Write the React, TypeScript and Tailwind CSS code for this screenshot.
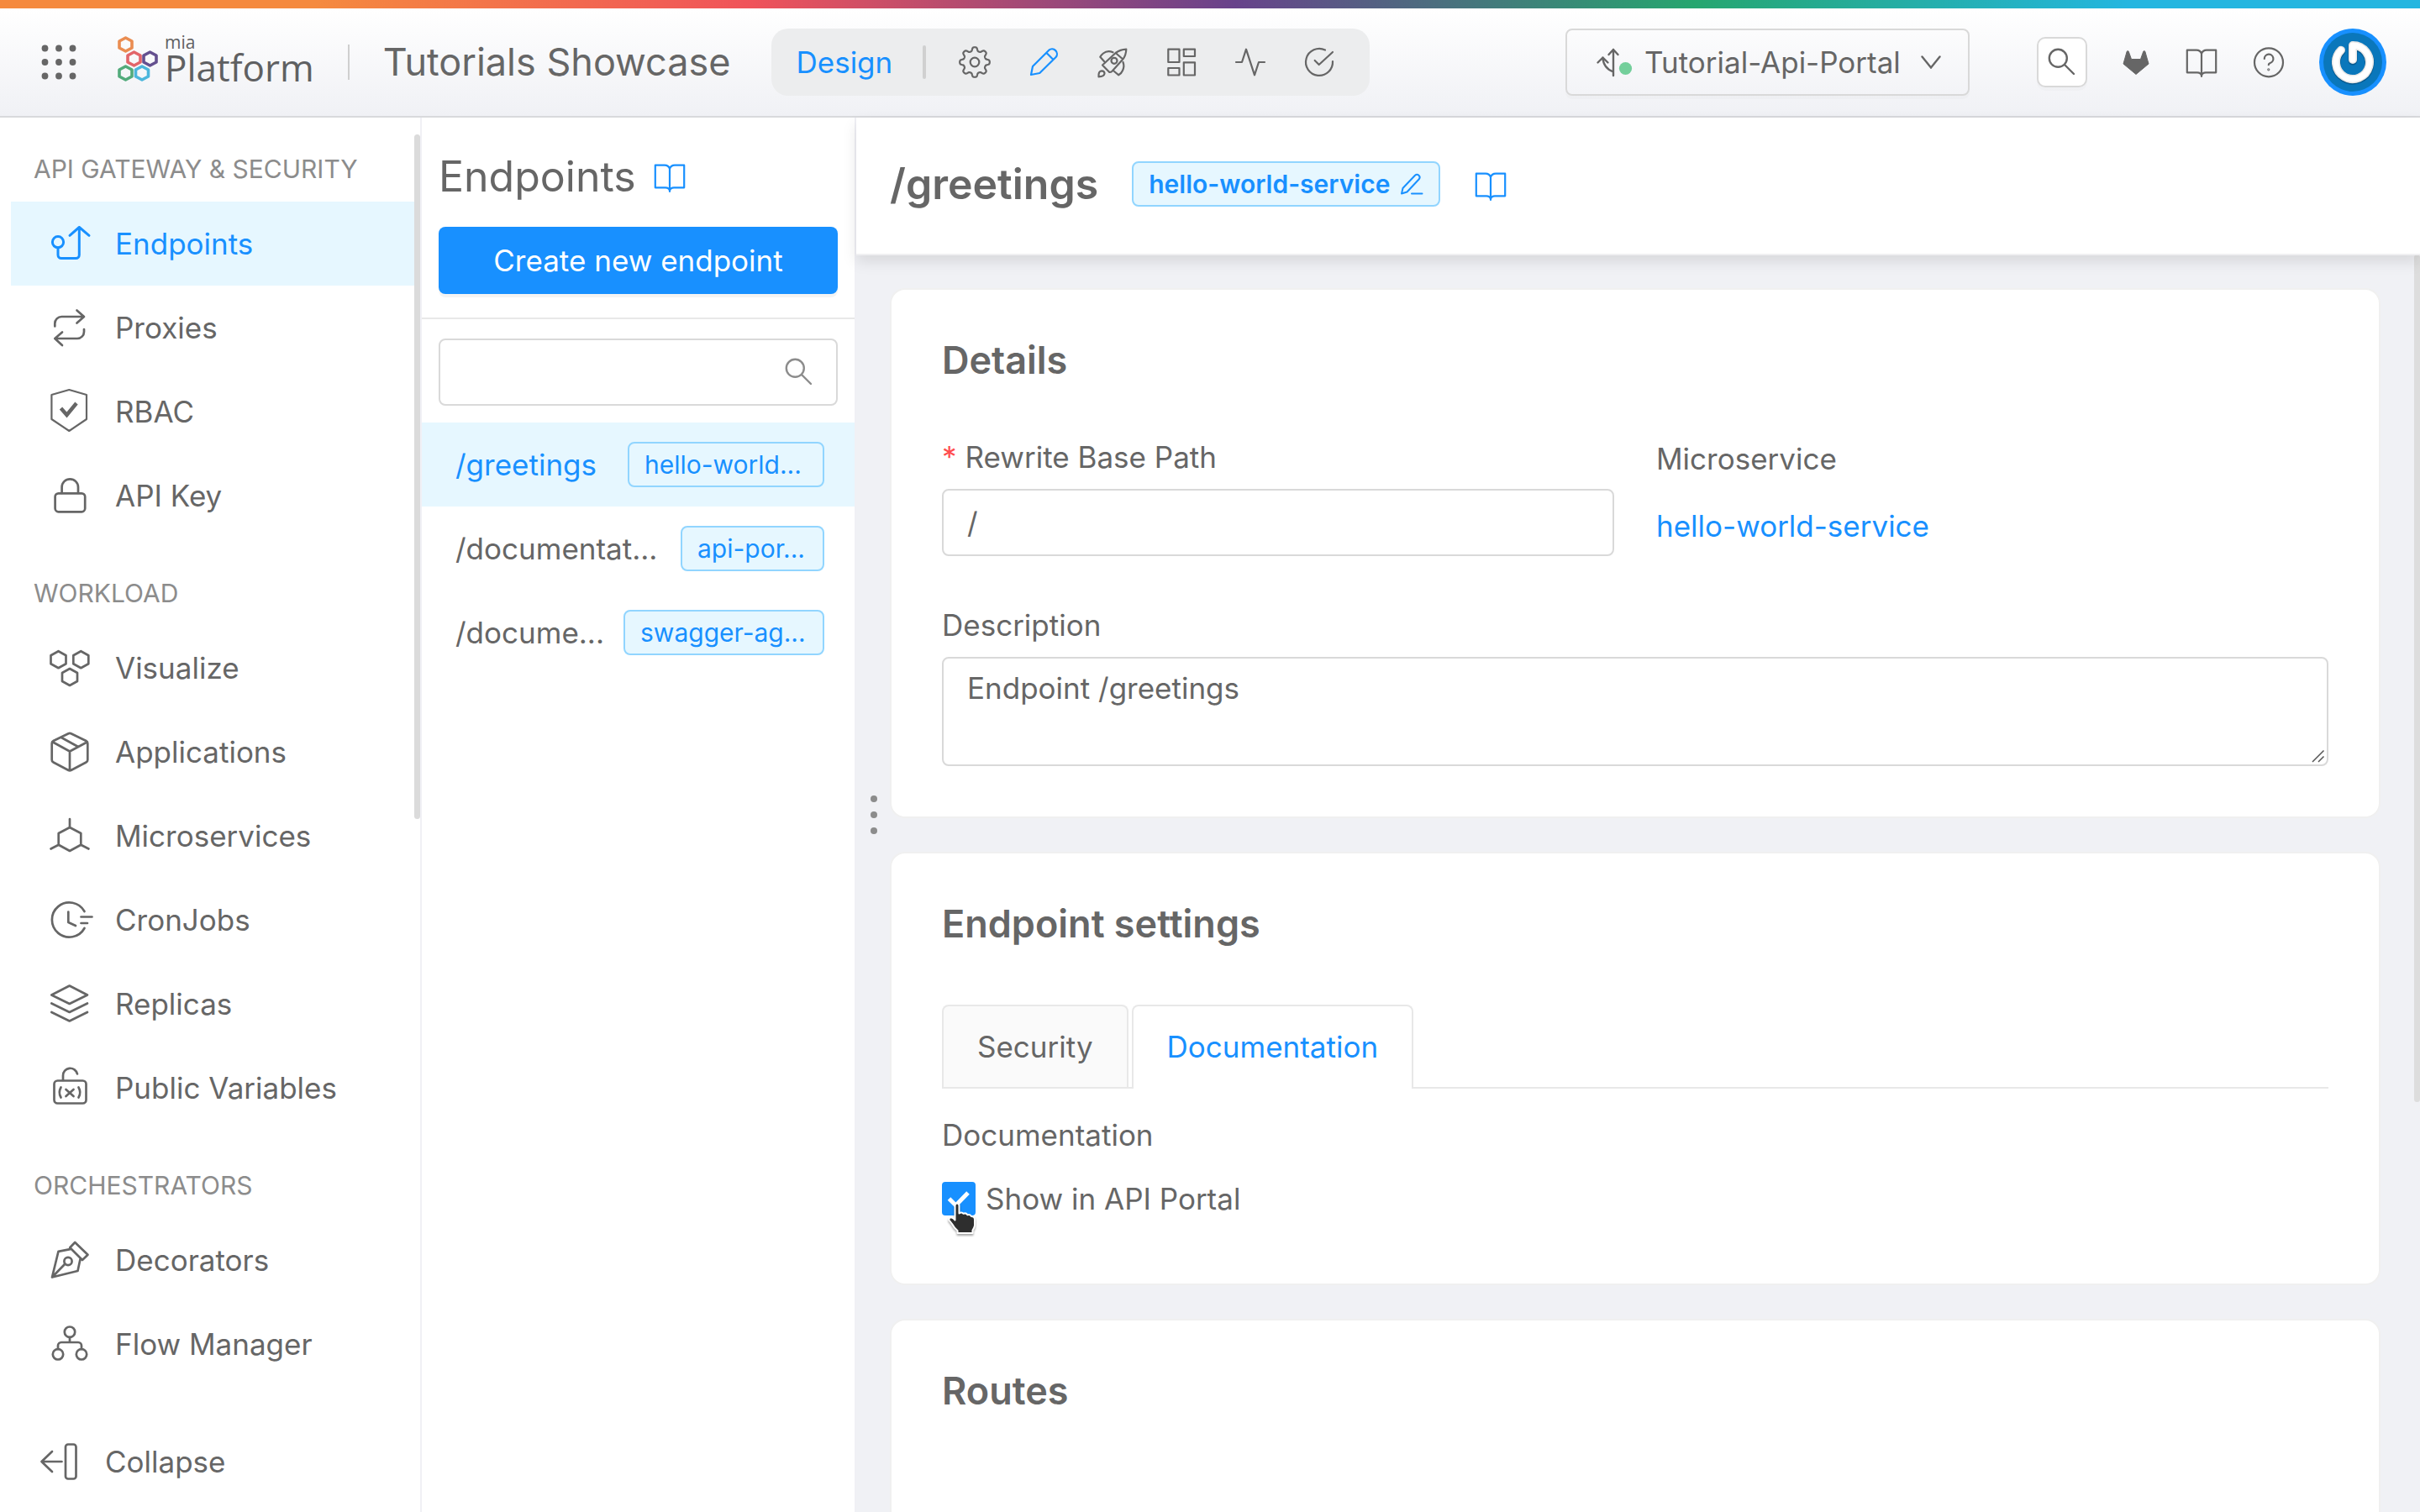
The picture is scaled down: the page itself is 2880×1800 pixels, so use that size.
import type { ReactNode } from "react";

type IconProps = { className?: string; width?: number; children: ReactNode };

function Icon48({ className = "", width = 2.7, children }: IconProps) {
  return (
    <svg aria-hidden="true" viewBox="0 0 48 48" className={`size-12 shrink-0 overflow-visible ${className}`} fill="none" stroke="currentColor" strokeWidth={width} strokeLinecap="round" strokeLinejoin="round">
      {children}
    </svg>
  );
}

function Icon40({ className = "", width = 2.2, children }: IconProps) {
  return (
    <svg aria-hidden="true" viewBox="0 0 40 40" className={`size-10 shrink-0 overflow-visible ${className}`} fill="none" stroke="currentColor" strokeWidth={width} strokeLinecap="round" strokeLinejoin="round">
      {children}
    </svg>
  );
}

const gearPath =
  Array.from({ length: 192 }, (_, i) => {
    const a = (i / 192) * Math.PI * 2;
    const r = 15.6 + 2.2 * Math.tanh(1.8 * Math.cos(8 * a)) / Math.tanh(1.8);
    return `${i === 0 ? "M" : "L"}${(20 + r * Math.cos(a)).toFixed(2)} ${(20 + r * Math.sin(a)).toFixed(2)}`;
  }).join(" ") + "Z";

function BookIcon({ className = "" }: { className?: string }) {
  return (
    <Icon40 className={className}>
      <path d="M20 37V10C19 7 17 5.7 14 5.7H2.8V32.3H15C18 32.3 19.5 33.5 20 36C20.5 33.5 22 32.3 25 32.3H37.2V5.7H26C23 5.7 21 7 20 10" />
    </Icon40>
  );
}

function SearchIcon({ className = "" }: { className?: string }) {
  return (
    <Icon40 className={className} width={2.4}>
      <circle cx="15.3" cy="15.3" r="10.5" />
      <path d="M23.5 23.5 34 34" />
    </Icon40>
  );
}

const hex = (x: number, y: number) => `M${x} ${y - 10}L${x + 9} ${y - 5}V${y + 5}L${x} ${y + 10}L${x - 9} ${y + 5}V${y - 5}Z`;

const sections = [
  {
    title: "API GATEWAY & SECURITY",
    items: [
      {
        label: "Endpoints",
        active: true,
        icon: (
          <Icon48 width={3}>
            <circle cx="10" cy="22.2" r="6.6" />
            <path d="M10 29v8.5a4 4 0 0 0 4 4h17.3a4 4 0 0 0 4-4V4.5M24 14.3 35.3 4.5 47 14.3" />
          </Icon48>
        ),
      },
      {
        label: "Proxies",
        icon: (
          <Icon48>
            <path d="M6.3 22.5V19a8 8 0 0 1 8-8H40M32.5 3.5 41 11l-8.5 7.5M41 26v3a8 8 0 0 1-8 8H7M15 29.5 6.3 37l8.7 8" />
          </Icon48>
        ),
      },
      {
        label: "RBAC",
        icon: (
          <Icon48 width={2.2}>
            <path d="M23.3-2 44 4v29L23.3 47 2.4 33V4Z" />
            <path d="m13.5 20 7 8L32 14" strokeWidth="4.4" strokeLinecap="butt" strokeLinejoin="miter" />
          </Icon48>
        ),
      },
      {
        label: "API Key",
        icon: (
          <Icon48>
            <rect x="6.6" y="21.3" width="35.6" height="22" rx="4" />
            <path d="M14.6 21V14a9.7 9.7 0 0 1 19.4 0v7" />
          </Icon48>
        ),
      },
    ],
  },
  {
    title: "WORKLOAD",
    items: [
      {
        label: "Visualize",
        icon: (
          <Icon48>
            <path d={hex(10.5, 14.2)} />
            <path d={hex(37.3, 14.2)} />
            <path d={hex(24, 35)} />
          </Icon48>
        ),
      },
      {
        label: "Applications",
        icon: (
          <Icon48>
            <path d="M22.5 2.2a3.5 3.5 0 0 1 3 0L43.5 11a3.2 3.2 0 0 1 1.8 3v19.5a3.2 3.2 0 0 1-1.8 3L25.5 46a3.5 3.5 0 0 1-3 0L4.5 36.5a3.2 3.2 0 0 1-1.8-3V14a3.2 3.2 0 0 1 1.8-3ZM4 12.5 24 23.5 44.5 12.5M24 23.5V46M14 7l20 11" />
          </Icon48>
        ),
      },
      {
        label: "Microservices",
        icon: (
          <Icon48>
            <path d="M24 4v10l13.3 7v13.7L24 42l-13.3-7.3V21L24 14M10.7 34.7 1.5 39.5M37.3 34.7l9.2 4.8" />
          </Icon48>
        ),
      },
      {
        label: "CronJobs",
        icon: (
          <Icon48>
            <path d="M41.5 14A20.6 20.6 0 1 0 41.5 34M22.3 14.5V27l8.7 4M37.5 20.5H50.5M37.5 28H45" />
          </Icon48>
        ),
      },
      {
        label: "Replicas",
        icon: (
          <Icon48>
            <path d="M23.7 2.5 45 13.5 23.7 24 2.3 13.5ZM2.3 23.5l21.4 10.5L45 23.5M2.3 34l21.4 10.5L45 34" />
          </Icon48>
        ),
      },
      {
        label: "Public Variables",
        icon: (
          <Icon48>
            <rect x="5.5" y="15.5" width="38" height="27" rx="4" />
            <path d="M16 15V9.5a8.6 8.6 0 0 1 17-2M13.5 23.5q-3.5 6 0 12M34.5 23.5q3.5 6 0 12M19.5 26l9 8M28.5 26l-9 8" />
          </Icon48>
        ),
      },
    ],
  },
  {
    title: "ORCHESTRATORS",
    items: [
      {
        label: "Decorators",
        icon: (
          <Icon48>
            <path d="M24.2 9.3 30.2 3 45.5 17.7 39 24ZM24.5 11.2 10.5 13.8 3 44.5 33.5 37l3-14M3 44.5 18.5 28.5" />
            <circle cx="22" cy="25.5" r="4.6" />
          </Icon48>
        ),
      },
      {
        label: "Flow Manager",
        icon: (
          <Icon48>
            <circle cx="24" cy="9.7" r="6.2" />
            <circle cx="10" cy="36.3" r="6.2" />
            <circle cx="38" cy="36.3" r="6.2" />
            <path d="M24 16v6M10 30v-4a4 4 0 0 1 4-4H34a4 4 0 0 1 4 4v4" />
          </Icon48>
        ),
      },
    ],
  },
];

const stages = [
  {
    label: "Settings",
    icon: (
      <Icon40>
        <path d={gearPath} />
        <circle cx="20" cy="20" r="5.3" />
      </Icon40>
    ),
  },
  {
    label: "Design",
    active: true,
    icon: (
      <Icon40>
        <path d="M5 35 7 25 26.3 5.7a5.9 5.9 0 0 1 8.3 8.3L15.3 33ZM23.5 9l8 8" />
      </Icon40>
    ),
  },
  {
    label: "Deploy",
    icon: (
      <Icon40>
        <path d="M36.3 4.7Q29 5 23.7 9L8 23.5 16.3 32q2 0 3-1L32.3 16.5Q36 12 36.3 4.7ZM23.7 9l8.6 7.5M20.5 8.3Q14 5.5 9 9.5 6.5 11.5 5.3 13.7L10 19M32.5 20Q34.5 25 32 30 30.5 33.5 27.3 35.3L22 31M3.5 37.3Q3 30.5 7 30.3 10.5 30.5 10.5 33.5 10.3 37 3.5 37.3Z" />
        <circle cx="22" cy="18.3" r="3.5" />
      </Icon40>
    ),
  },
  {
    label: "Dashboards",
    icon: (
      <Icon40>
        <path d="M4.3 4.7H17.5V20H4.3ZM22.8 4.7H36V13H22.8ZM4.3 27H17.5V35.5H4.3ZM22.8 20.3H36V35.5H22.8Z" />
      </Icon40>
    ),
  },
  {
    label: "Monitoring",
    icon: (
      <Icon40>
        <path d="M3 20h7L15 4.7 25 35.3 30 20h7" />
      </Icon40>
    ),
  },
  {
    label: "Quality",
    icon: (
      <Icon40>
        <path d="M27 5.5A16 16 0 1 0 36 19M14.7 18l5 5L36 8" />
      </Icon40>
    ),
  },
];

const endpoints = [
  { path: "/greetings", service: "hello-world...", tag: "w-[234px]", active: true },
  { path: "/documentat...", service: "api-por...", tag: "w-[171px]" },
  { path: "/docume...", service: "swagger-ag...", tag: "w-[239px]" },
];

function Logo() {
  const cell = (x: number, y: number, color: string) => (
    <path d={`M${x} ${y - 8}L${x + 7.5} ${y - 4}V${y + 4}L${x} ${y + 8}L${x - 7.5} ${y + 4}V${y - 4}Z`} stroke={color} strokeWidth="3.6" strokeLinejoin="round" fill="none" />
  );
  return (
    <a href="#home" className="flex items-center gap-2 font-['Open_Sans',sans-serif] text-[#5f6062]">
      <svg aria-hidden="true" viewBox="0 0 48 54" className="mb-2 h-[54px] w-12 shrink-0 overflow-visible">
        {cell(9.5, 10, "#ea8d51")}
        {cell(19.5, 27, "#e2656a")}
        {cell(38.5, 27, "#64508f")}
        {cell(9.5, 44, "#52ab7b")}
        {cell(29, 44, "#4cb6dc")}
      </svg>
      <span className="flex flex-col pb-2">
        <span className="text-[21px] leading-5">mia</span>
        <span className="text-[44px] leading-10">Platform</span>
      </span>
    </a>
  );
}

function Header() {
  return (
    <header className="shrink-0">
      <div className="h-2.5 bg-[linear-gradient(90deg,#f58a3f_0%,#f58a3f_13%,#f0535a_31%,#68428b_51%,#26a66f_70%,#24b6e0_88%,#24b6e0_100%)]" />
      <div className="flex h-[130px] items-center border-b-2 border-[#d8d9dc] bg-gradient-to-b from-white to-[#f0f1f5] pr-10 pl-[46px]">
        <button type="button" aria-label="Applications menu" className="mr-[46px]">
          <svg aria-hidden="true" viewBox="0 0 48 48" className="size-12" fill="#666">
            {[7.5, 24, 40.5].map((y) => [7.5, 24, 40.5].map((x) => <circle key={`${x}-${y}`} cx={x} cy={y} r="3.9" />))}
          </svg>
        </button>
        <Logo />
        <span className="ml-10 h-[42px] w-0.5 bg-[#cfcfcf]" />
        <span className="ml-10 text-[45px] leading-[60px] whitespace-nowrap">Tutorials Showcase</span>
        <nav aria-label="Stages" className="ml-12 flex h-20 items-center rounded-[20px] bg-[#ecedee] pr-10 pl-[30px]">
          <span className="text-[35px] text-[#1890ff]">Design</span>
          <span className="mr-[38px] ml-9 h-10 w-1 rounded-full bg-[#d0d0d0]" />
          <span className="flex gap-[42px]">
            {stages.map((s) => (
              <button key={s.label} type="button" aria-label={s.label} className={s.active ? "text-[#1890ff]" : ""}>
                {s.icon}
              </button>
            ))}
          </span>
        </nav>
        <div className="ml-auto flex items-center">
          <label className="flex h-20 items-center rounded-lg border-2 border-[#d9d9d9] px-8 shadow-[0_4px_0_rgba(0,0,0,0.015)]">
            <svg aria-hidden="true" viewBox="0 0 50 40" className="h-10 w-[50px] overflow-visible" fill="none" stroke="#666" strokeWidth="2.4" strokeLinecap="round" strokeLinejoin="round">
              <path d="M23 36V5M17.5 11 23 5l5.5 6M23 31.5Q11 27 10.5 14.5M4.5 20.5l6-6 6 6" />
              <circle cx="37.5" cy="27.5" r="7.6" fill="#73cf9b" stroke="none" />
            </svg>
            <select aria-label="Branch" className="ml-2.5 appearance-none bg-transparent text-[35px] leading-[54px] outline-none">
              <option>Tutorial-Api-Portal</option>
            </select>
            <svg aria-hidden="true" viewBox="0 0 24 16" className="ml-6 h-4 w-6" fill="none" stroke="#666" strokeWidth="2.4" strokeLinecap="round">
              <path d="m1.5 1.5 10.5 13L22.5 1.5" />
            </svg>
          </label>
          <button type="button" aria-label="Search" className="ml-20 flex size-[60px] items-center justify-center rounded-[10px] border-2 border-[#d9d9d9] bg-white shadow-[0_4px_0_rgba(0,0,0,0.015)]">
            <SearchIcon />
          </button>
          <button type="button" aria-label="Repository" className="ml-[38px]">
            <svg aria-hidden="true" viewBox="0 0 40 40" className="size-10" fill="#666" stroke="#666" strokeWidth="1" strokeLinejoin="round">
              <path d="M5 22 9.2 7.2q1-1.2 2 0L14.5 16.5H25.5L28.8 7.2q1-1.2 2 0L35 22 20 34.5Z" />
            </svg>
          </button>
          <button type="button" aria-label="Documentation" className="ml-[38px]">
            <BookIcon />
          </button>
          <button type="button" aria-label="Help" className="ml-10">
            <Icon40>
              <circle cx="20" cy="20.3" r="17" />
              <path d="M14.8 16a5.3 5.3 0 1 1 7 5q-2 .8-2 2.2" />
              <circle cx="19.8" cy="28.8" r=".5" />
            </Icon40>
          </button>
          <button type="button" aria-label="Account" className="ml-10">
            <svg aria-hidden="true" viewBox="0 0 80 80" className="size-20" fill="none" strokeLinecap="round" strokeLinejoin="round">
              <circle cx="40" cy="40" r="40" fill="#1890ff" />
              <circle cx="40" cy="40" r="35" fill="#0a77bb" />
              <path d="M40 38V21A20 20 0 1 1 26 26.7" stroke="#075a8f" strokeWidth="11" />
              <path d="M40 37V20A20 20 0 1 1 26 25.7" stroke="#e6e6e6" strokeWidth="10" />
              <path d="M40 37V20A20 20 0 1 1 26 25.7" stroke="#fff" strokeWidth="7" />
            </svg>
          </button>
        </div>
      </div>
    </header>
  );
}

function Sidebar() {
  return (
    <aside className="flex w-[502px] shrink-0 flex-col border-r-2 border-[#f0f0f5] bg-white">
      <div className="relative min-h-0 flex-1">
        <nav aria-label="Sections" className="flex flex-col gap-11 pt-[39px] pr-[7px]">
          {sections.map((section) => (
            <section key={section.title}>
              <h2 className="mb-[17px] pl-10 text-[30px] leading-[44px] text-[#8c8c8c]">{section.title}</h2>
              <ul>
                {section.items.map((item) => (
                  <li key={item.label}>
                    <a href={`#${item.label}`} className={`ml-[13px] flex h-[100px] items-center gap-[30px] pl-[46px] text-[35px] ${"active" in item && item.active ? "bg-[#e6f7ff] text-[#1890ff]" : ""}`}>
                      {item.icon}
                      {item.label}
                    </a>
                  </li>
                ))}
              </ul>
            </section>
          ))}
        </nav>
        <div className="absolute top-5 right-0 h-[815px] w-[7px] rounded-full bg-[#dbdbdb]" />
      </div>
      <button type="button" className="flex h-[120px] shrink-0 items-center gap-[30px] pl-[47px] text-[35px]">
        <Icon48>
          <path d="M2.5 24H26.5M15 12 2.5 24 15 36" />
          <rect x="31" y="3.5" width="12.5" height="41" rx="3" />
        </Icon48>
        Collapse
      </button>
    </aside>
  );
}

function EndpointList() {
  return (
    <section className="flex w-[517px] shrink-0 flex-col border-r-2 border-[#f0f0f5] bg-white">
      <div className="border-b-2 border-[#e8e8e8] px-5 pt-9 pb-7">
        <div className="flex items-center gap-5">
          <h1 className="text-[50px] leading-[68px]">Endpoints</h1>
          <a href="#docs" aria-label="Endpoint docs" className="pt-0.5 text-[#1890ff]">
            <BookIcon />
          </a>
        </div>
        <button type="button" className="mt-[26px] flex h-20 w-full items-center justify-center rounded-lg bg-[#1890ff] text-[35px] text-white shadow-[0_4px_0_rgba(0,0,0,0.045)]">
          Create new endpoint
        </button>
      </div>
      <label className="mx-5 mt-[23px] mb-5 flex h-20 items-center rounded-lg border-2 border-[#d9d9d9] pr-6 text-[#8c8c8c]">
        <input type="text" aria-label="Search endpoints" className="h-full min-w-0 flex-1 bg-transparent pl-7 text-[35px] outline-none" />
        <SearchIcon />
      </label>
      <ul>
        {endpoints.map((e) => (
          <li key={e.path}>
            <a href={`#${e.path}`} className={`flex h-[100px] items-center justify-between pr-9 pl-10 text-[35px] ${e.active ? "bg-[#e6f7ff] text-[#1890ff]" : ""}`}>
              {e.path}
              <span className={`h-[54px] rounded-lg border-2 border-[#91d5ff] bg-[#e6f7ff] pl-[18px] text-[30px] leading-[50px] text-[#1890ff] ${e.tag}`}>{e.service}</span>
            </a>
          </li>
        ))}
      </ul>
    </section>
  );
}

function Card({ title, className = "", children }: { title: string; className?: string; children?: ReactNode }) {
  return (
    <section className={`rounded-[18px] border-2 border-[#f0f0f0] bg-white px-[60px] pt-[52px] ${className}`}>
      <h2 className="text-[45px] leading-[64px] font-semibold">{title}</h2>
      {children}
    </section>
  );
}

function HandCursor() {
  return (
    <svg aria-hidden="true" viewBox="0 0 36 40" className="pointer-events-none absolute top-7 left-1.5 h-10 w-9 drop-shadow-[0_2px_1px_rgba(0,0,0,0.35)]">
      <path d="M9.5 4.5Q9.5 1.5 12 1.5T14.5 4.5V13.5Q17.5 11.5 19.5 13.8 22.5 12.5 24.5 15.3 27.5 14.3 29 17 33 17 33 21V28Q32.5 31 30.5 33.5V37H12.5V34Q9 31.5 6 26L2.5 21.5Q2 18.5 5 18.3 8 19 9.5 21.5Z" fill="#2e2e2e" stroke="#fff" strokeWidth="2" strokeLinejoin="round" />
    </svg>
  );
}

const field = "w-full rounded-lg border-2 border-[#d9d9d9] bg-white px-7 text-[35px] outline-none";

function Main() {
  return (
    <main className="relative flex min-w-0 flex-1 flex-col bg-[#f0f1f5]">
      <div className="z-10 flex h-[164px] shrink-0 items-center border-b-2 border-[#f0f0f2] bg-white pr-10 pb-1 pl-10 shadow-[0_8px_16px_rgba(0,0,0,0.10)]">
        <h1 className="text-[50px] leading-[68px] font-semibold">/greetings</h1>
        <button type="button" className="ml-10 flex h-[54px] items-center gap-3 rounded-lg border-2 border-[#91d5ff] bg-[#e6f7ff] px-[18px] text-[30px] font-semibold text-[#1890ff]">
          hello-world-service
          <svg aria-hidden="true" viewBox="0 0 28 28" className="size-7" fill="none" stroke="currentColor" strokeWidth="2" strokeLinecap="round" strokeLinejoin="round">
            <path d="M2 25.5 3.5 19 18 3.8a3.3 3.3 0 0 1 4.8 4.5L8.5 23.5ZM14 25.5H26.5" />
          </svg>
        </button>
        <a href="#docs" aria-label="Service docs" className="ml-10 pt-1 text-[#1890ff]">
          <BookIcon />
        </a>
      </div>
      <div className="flex min-h-0 flex-1 flex-col gap-10 overflow-hidden pt-[39px] pr-[47px] pl-10">
        <Card title="Details" className="shrink-0 pb-[60px]">
          <div className="mt-[61px] grid grid-cols-2 gap-[50px]">
            <div>
              <label htmlFor="base-path" className="block text-[35px] leading-[44px]">
                <span className="mr-2.5 text-[#ff4d4f]">*</span>
                Rewrite Base Path
              </label>
              <input id="base-path" type="text" defaultValue="/" className={`mt-4 h-20 ${field}`} />
            </div>
            <div className="pt-0.5 text-[35px] leading-[44px]">
              <p>Microservice</p>
              <a href="#service" className="mt-9 block text-[#1890ff]">
                hello-world-service
              </a>
            </div>
          </div>
          <label htmlFor="description" className="mt-[60px] block text-[35px] leading-[44px]">
            Description
          </label>
          <div className="relative mt-4">
            <textarea id="description" defaultValue="Endpoint /greetings" className={`block h-[130px] resize-none pt-2 leading-[54px] ${field}`} />
            <svg aria-hidden="true" viewBox="0 0 16 16" className="absolute right-1 bottom-1 size-4" stroke="#555" strokeWidth="1.5">
              <path d="M1 15 14.5 1.5M8 15l6.5-6.5" />
            </svg>
          </div>
        </Card>
        <Card title="Endpoint settings" className="shrink-0 pb-[77px]">
          <div role="tablist" className="mt-16 flex gap-1 border-b-2 border-[#e8e8e8]">
            <button type="button" role="tab" aria-selected="false" className="h-[98px] rounded-t-lg border-2 border-b-0 border-[#e8e8e8] bg-[#fafafa] px-10 text-[35px]">
              Security
            </button>
            <button type="button" role="tab" aria-selected="true" className="-mb-0.5 h-[100px] rounded-t-lg border-2 border-b-0 border-[#e8e8e8] bg-white px-10 pb-0.5 text-[35px] text-[#1890ff]">
              Documentation
            </button>
          </div>
          <p className="mt-[33px] text-[35px] leading-[44px]">Documentation</p>
          <div className="relative mt-[30px] flex h-[48px] items-center gap-3">
            <input
              id="show-portal"
              type="checkbox"
              defaultChecked
              className="peer size-10 appearance-none rounded-sm border-2 border-[#d9d9d9] checked:border-[#1890ff] checked:bg-[#1890ff]"
            />
            <svg aria-hidden="true" viewBox="0 0 40 40" className="pointer-events-none absolute left-0 hidden size-10 peer-checked:block" fill="none" stroke="#fff" strokeWidth="5">
              <path d="m8.5 20 8 8L31 13" />
            </svg>
            <label htmlFor="show-portal" className="text-[35px] leading-[44px]">
              Show in API Portal
            </label>
            <HandCursor />
          </div>
        </Card>
        <Card title="Routes" className="flex-1 rounded-b-none border-b-0" />
      </div>
      <div className="absolute top-[163px] right-0 h-[1009px] w-[7px] rounded-full bg-[#dddddd]" />
      <div className="absolute top-[807px] left-[17px] flex flex-col gap-[11px]">
        <span className="size-2 rounded-full bg-[#8c8c8c]" />
        <span className="size-2 rounded-full bg-[#8c8c8c]" />
        <span className="size-2 rounded-full bg-[#8c8c8c]" />
      </div>
    </main>
  );
}

export default function App() {
  return (
    <div className="flex h-screen flex-col overflow-hidden bg-white font-['Inter',sans-serif] text-[#666666]">
      <Header />
      <div className="flex min-h-0 flex-1">
        <Sidebar />
        <EndpointList />
        <Main />
      </div>
    </div>
  );
}
